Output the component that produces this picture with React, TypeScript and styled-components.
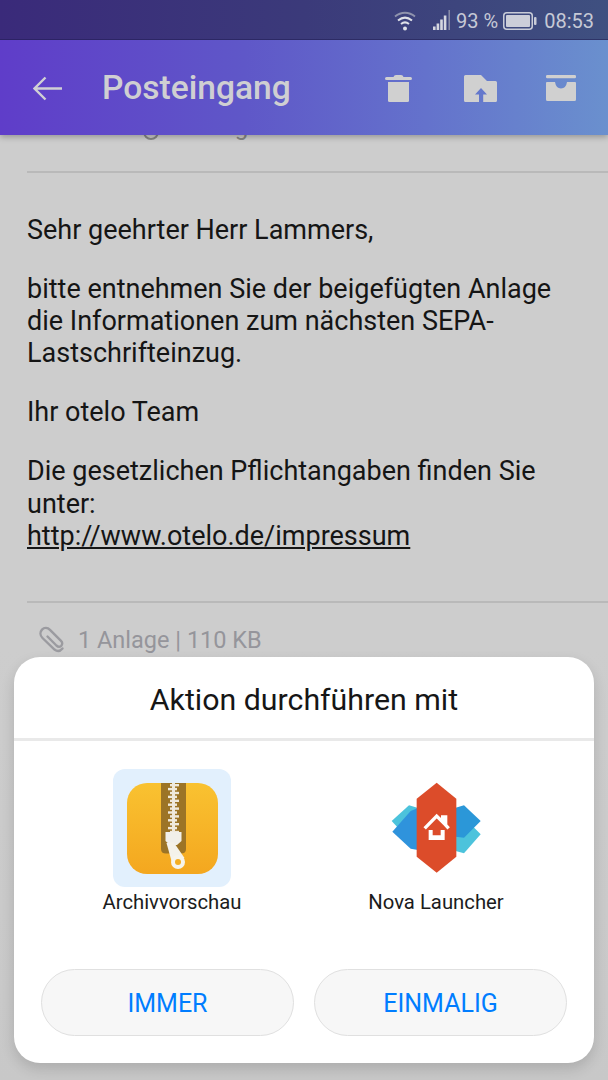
import React from "react";
import styled, { createGlobalStyle } from "styled-components";

const Global = createGlobalStyle`
  html, body { margin: 0; padding: 0; background: #cccccc; }
  * { box-sizing: border-box; }
`;

const Screen = styled.div`
  position: relative;
  width: 608px;
  height: 1080px;
  overflow: hidden;
  background: linear-gradient(180deg, #cdcdcd 0%, #cdcdcd 60%, #c8c8c8 100%);
  font-family: Roboto, "Liberation Sans", sans-serif;
`;

const Header = styled.header`
  position: relative;
  z-index: 2;
  box-shadow: 0 2px 6px rgba(0, 0, 0, 0.28);
`;

const StatusBar = styled.div`
  height: 40px;
  display: flex;
  align-items: center;
  justify-content: flex-end;
  padding: 2px 14px 0 0;
  background: linear-gradient(90deg, #3a2a7a 0%, #3b3a7a 50%, #3f5080 100%);
  color: #c6c9d6;
  font-size: 20px;
  box-shadow: inset 0 -1px 0 rgba(30, 25, 80, 0.5);
`;

const StatusText = styled.span<{ $ml: number }>`
  margin-left: ${(p) => p.$ml}px;
  line-height: 1;
`;

const StatusIcon = styled.svg<{ $ml?: number }>`
  display: block;
  margin-left: ${(p) => p.$ml ?? 0}px;
  flex: none;
`;

const AppBar = styled.div`
  height: 95px;
  display: flex;
  align-items: center;
  padding: 1px 32px 0 33px;
  background: linear-gradient(90deg, #5f3dc9 0%, #5f57c8 40%, #6472cc 70%, #6a90ce 100%);
  color: #d0d0d0;
`;

const BackIcon = styled.svg`
  display: block;
  flex: none;
`;

const Title = styled.h1`
  margin: 0 0 0 40px;
  flex: 1;
  font-size: 33.6px;
  font-weight: 500;
  line-height: 40px;
  color: #cfcfd2;
`;

const Actions = styled.div`
  display: flex;
  align-items: center;
  gap: 49px;
`;

const ActionIcon = styled.svg<{ $mr?: number }>`
  display: block;
  margin-right: ${(p) => p.$mr ?? 0}px;
`;

const Mail = styled.main`
  position: relative;
  z-index: 1;
`;

const MetaRow = styled.div`
  height: 58px;
  margin-top: -22px;
  padding-left: 143px;
  display: flex;
  align-items: flex-start;
  gap: 6px;
  color: #858585;
  font-size: 24px;
  line-height: 28px;
`;

const MetaText = styled.span`
  margin-left: 1px;
`;

const Rule = styled.hr`
  margin: 0 0 0 27px;
  border: 0;
  height: 2px;
  background: #b9b9b9;
`;

const Body = styled.div`
  padding: 41px 28px 0 27px;
  height: 428px;
  color: #151515;
  font-size: 27px;
  line-height: 32.2px;
`;

const Para = styled.p`
  margin: 0 0 26.8px;
`;

const MailLink = styled.a`
  color: #151515;
  text-decoration: underline;
`;

const Attachment = styled.div`
  display: flex;
  align-items: center;
  gap: 10px;
  padding: 21px 0 0 38px;
  color: #95959b;
  font-size: 23.5px;
  line-height: 32px;
`;

const ClipIcon = styled.svg`
  display: block;
`;

const Dialog = styled.section`
  position: absolute;
  z-index: 3;
  left: 14px;
  top: 657px;
  width: 580px;
  height: 406px;
  border-radius: 26px;
  background: #ffffff;
  box-shadow: 0 6px 14px rgba(0, 0, 0, 0.14);
  display: flex;
  flex-direction: column;
`;

const DialogTitle = styled.h2`
  margin: 0;
  height: 84px;
  display: flex;
  align-items: center;
  justify-content: center;
  border-bottom: 3px solid #e9e9e9;
  font-size: 30.3px;
  font-weight: 400;
  color: #161616;
  padding-top: 3px;
`;

const Apps = styled.div`
  display: grid;
  grid-template-columns: 316px 212px;
  padding-top: 28px;
`;

const AppItem = styled.div`
  display: flex;
  flex-direction: column;
  align-items: center;
`;

const AppTile = styled.div<{ $selected?: boolean }>`
  width: 118px;
  height: 118px;
  border-radius: 12px;
  background: ${(p) => (p.$selected ? "#e2f0fd" : "transparent")};
  display: flex;
  align-items: center;
  justify-content: center;
`;

const AppLabel = styled.div`
  margin-top: 3px;
  font-size: 20.3px;
  line-height: 24px;
  color: #1c1c1c;
  white-space: nowrap;
`;

const Buttons = styled.div`
  display: flex;
  justify-content: space-between;
  padding: 0 27px;
  margin-top: 55px;
`;

const Pill = styled.button`
  width: 253px;
  height: 67px;
  border-radius: 34px;
  border: 1px solid #e0e0e0;
  background: #f7f7f7;
  color: #007dff;
  font-family: inherit;
  font-size: 25px;
  padding: 1px 0 0;
`;

const Wifi = () => (
  <StatusIcon width="24" height="24" viewBox="0 0 24 24" fill="none">
    <path d="M2 7.500C8 2.500 16 2.500 22 7.500" stroke="#8f93ad" strokeWidth="1.800" />
    <path d="M5 11.500C9.500 7.800 14.500 7.800 19 11.500" stroke="#dfe1e8" strokeWidth="2" />
    <path d="M8 15C10.500 13 13.500 13 16 15" stroke="#dfe1e8" strokeWidth="2" />
    <circle cx="12" cy="19.500" r="2" fill="#dfe1e8" />
  </StatusIcon>
);

const Signal = () => (
  <StatusIcon width="18" height="22" viewBox="0 0 18 22" $ml={16}>
    <rect x="0" y="16.500" width="2.600" height="3.500" fill="#d5d7e0" />
    <rect x="3.600" y="13.500" width="2.600" height="6.500" fill="#d5d7e0" />
    <rect x="7.200" y="9.500" width="2.600" height="10.500" fill="#d5d7e0" />
    <rect x="10.800" y="5.500" width="2.600" height="14.500" fill="#d5d7e0" />
    <rect x="15.500" y="0" width="1.400" height="20" fill="#8f93ad" />
  </StatusIcon>
);

const Battery = () => (
  <StatusIcon width="34" height="18" viewBox="0 0 34 18" $ml={5}>
    <rect x="0.750" y="0.750" width="28.500" height="16.500" rx="3" fill="none" stroke="#c9ccd8" strokeWidth="1.500" />
    <rect x="3" y="3" width="24" height="12" rx="1" fill="#ccced9" />
    <rect x="31" y="5" width="2.500" height="8" rx="1" fill="#c9ccd8" />
  </StatusIcon>
);

const Clip = () => (
  <ClipIcon width="30" height="30" viewBox="0 0 30 30" fill="none">
    <path
      d="M24.500 23.500C22 26.500 19 26.500 16.500 24.500L4.500 13C2 10.500 1.800 7 4 4.600C6.300 2.200 9.600 2.400 12 4.800L23 15.800C24.600 17.400 24.600 19.400 23.200 20.800C21.800 22.100 20 22 18.400 20.500L9.500 11.500"
      stroke="#9b9ba0"
      strokeWidth="2.400"
      strokeLinecap="round"
    />
  </ClipIcon>
);

const ZipIcon = () => (
  <svg width="91" height="91" viewBox="0 0 91 91">
    <defs>
      <linearGradient id="zipBg" x1="0" y1="0" x2="0" y2="1">
        <stop offset="0" stopColor="#f9c231" />
        <stop offset="1" stopColor="#f4a71f" />
      </linearGradient>
    </defs>
    <rect width="91" height="91" rx="20" fill="url(#zipBg)" />
    <path d="M34 0H59V66Q59 70.500 54 70.500H39Q34 70.500 34 66Z" fill="#9c7426" />
    <rect x="45" y="0" width="3" height="52" fill="#efe9dc" />
    {Array.from({ length: 13 }, (_, i) => (
      <rect key={i} x={i % 2 ? 41 : 43} y={1 + i * 3.900} width="9" height="2.400" fill="#efe9dc" />
    ))}
    <path d="M38.500 49H54.500V58L50 62H43L38.500 58Z" fill="#f1f0ea" />
    <path d="M39.500 60L46.500 59L57.500 75L44.500 78Z" fill="#f4f2ea" />
    <circle cx="51" cy="79" r="7" fill="#f6f4ec" />
    <circle cx="51" cy="79" r="3" fill="#f4ae22" />
  </svg>
);

const NovaIcon = () => (
  <svg width="95" height="95" viewBox="85 45 285 285">
    <path d="M93 165L145 118L170 125V200L130 205Z" fill="#4cc3dc" />
    <path d="M360 205L310 262L285 255V180L330 175Z" fill="#4cc3dc" />
    <path d="M95 197L150 135L172 126V252L150 248Z" fill="#2f93dc" />
    <path d="M285 125L310 118L360 165L310 215L285 212Z" fill="#2b97d8" />
    <path d="M228 50L287 98V272L228 320L168 272V98Z" fill="#dc4c2a" />
    <path d="M192 187L228 150L246 168V153H255V177L264 187" fill="none" stroke="#fff" strokeWidth="10" />
    <path d="M204 192V222H252V192H240V208H216V192Z" fill="#fff" />
  </svg>
);

export default function App() {
  return (
    <Screen>
      <Global />
      <Header>
        <StatusBar>
          <Wifi />
          <Signal />
          <StatusText $ml={5}>93 %</StatusText>
          <Battery />
          <StatusText $ml={7}>08:53</StatusText>
        </StatusBar>
        <AppBar>
          <BackIcon width="29" height="25" viewBox="0 0 29 25" fill="none">
            <path d="M12.500 1.500L1.500 12.500L12.500 23.500M1.500 12.500H29" stroke="#d0d0d4" strokeWidth="2.400" />
          </BackIcon>
          <Title>Posteingang</Title>
          <Actions>
            <ActionIcon width="27" height="27" viewBox="0 0 27 27" fill="#d0d0d0" $mr={3}>
              <path d="M0 3.500Q0 2 1.500 2H8.500Q9 0 11 0H16Q18 0 18.500 2H25.500Q27 2 27 3.500Q27 5 25.500 5H1.500Q0 5 0 3.500Z" />
              <path d="M3 7H24V25.500Q24 27 22.500 27H4.500Q3 27 3 25.500Z" />
            </ActionIcon>
            <ActionIcon width="33" height="27" viewBox="0 0 33 27">
              <path d="M0 1.500Q0 0 1.500 0H17L23 6H31.500Q33 6 33 7.500V25.500Q33 27 31.500 27H1.500Q0 27 0 25.500Z" fill="#d0d0d0" />
              <path d="M17 13L23 19.500H19.200V27H15V19.500H11Z" fill="#6478cc" />
            </ActionIcon>
            <ActionIcon width="30" height="26" viewBox="0 0 30 26" fill="#d0d0d0">
              <rect x="0" y="0" width="30" height="3.200" rx="1.200" />
              <path d="M0 8Q0 7 1 7H9Q10 13.500 15 13.500Q20 13.500 21 7H29Q30 7 30 8V24.500Q30 26 28.500 26H1.500Q0 26 0 24.500Z" />
            </ActionIcon>
          </Actions>
        </AppBar>
      </Header>

      <Mail>
        <MetaRow>
          <svg width="16" height="28" viewBox="0 0 16 28" fill="none">
            <circle cx="8" cy="19" r="7" stroke="#858585" strokeWidth="2" />
          </svg>
          <MetaText>Montag</MetaText>
        </MetaRow>
        <Rule />
        <Body>
          <Para>Sehr geehrter Herr Lammers,</Para>
          <Para>
            bitte entnehmen Sie der beigefügten Anlage die Informationen zum nächsten SEPA-Lastschrifteinzug.
          </Para>
          <Para>Ihr otelo Team</Para>
          <Para>
            Die gesetzlichen Pflichtangaben finden Sie unter:
            <br />
            <MailLink>http://www.otelo.de/impressum</MailLink>
          </Para>
        </Body>
        <Rule />
        <Attachment>
          <Clip />
          <span>1 Anlage | 110 KB</span>
        </Attachment>
      </Mail>

      <Dialog>
        <DialogTitle>Aktion durchführen mit</DialogTitle>
        <Apps>
          <AppItem>
            <AppTile $selected>
              <ZipIcon />
            </AppTile>
            <AppLabel>Archivvorschau</AppLabel>
          </AppItem>
          <AppItem>
            <AppTile>
              <NovaIcon />
            </AppTile>
            <AppLabel>Nova Launcher</AppLabel>
          </AppItem>
        </Apps>
        <Buttons>
          <Pill>IMMER</Pill>
          <Pill>EINMALIG</Pill>
        </Buttons>
      </Dialog>
    </Screen>
  );
}
